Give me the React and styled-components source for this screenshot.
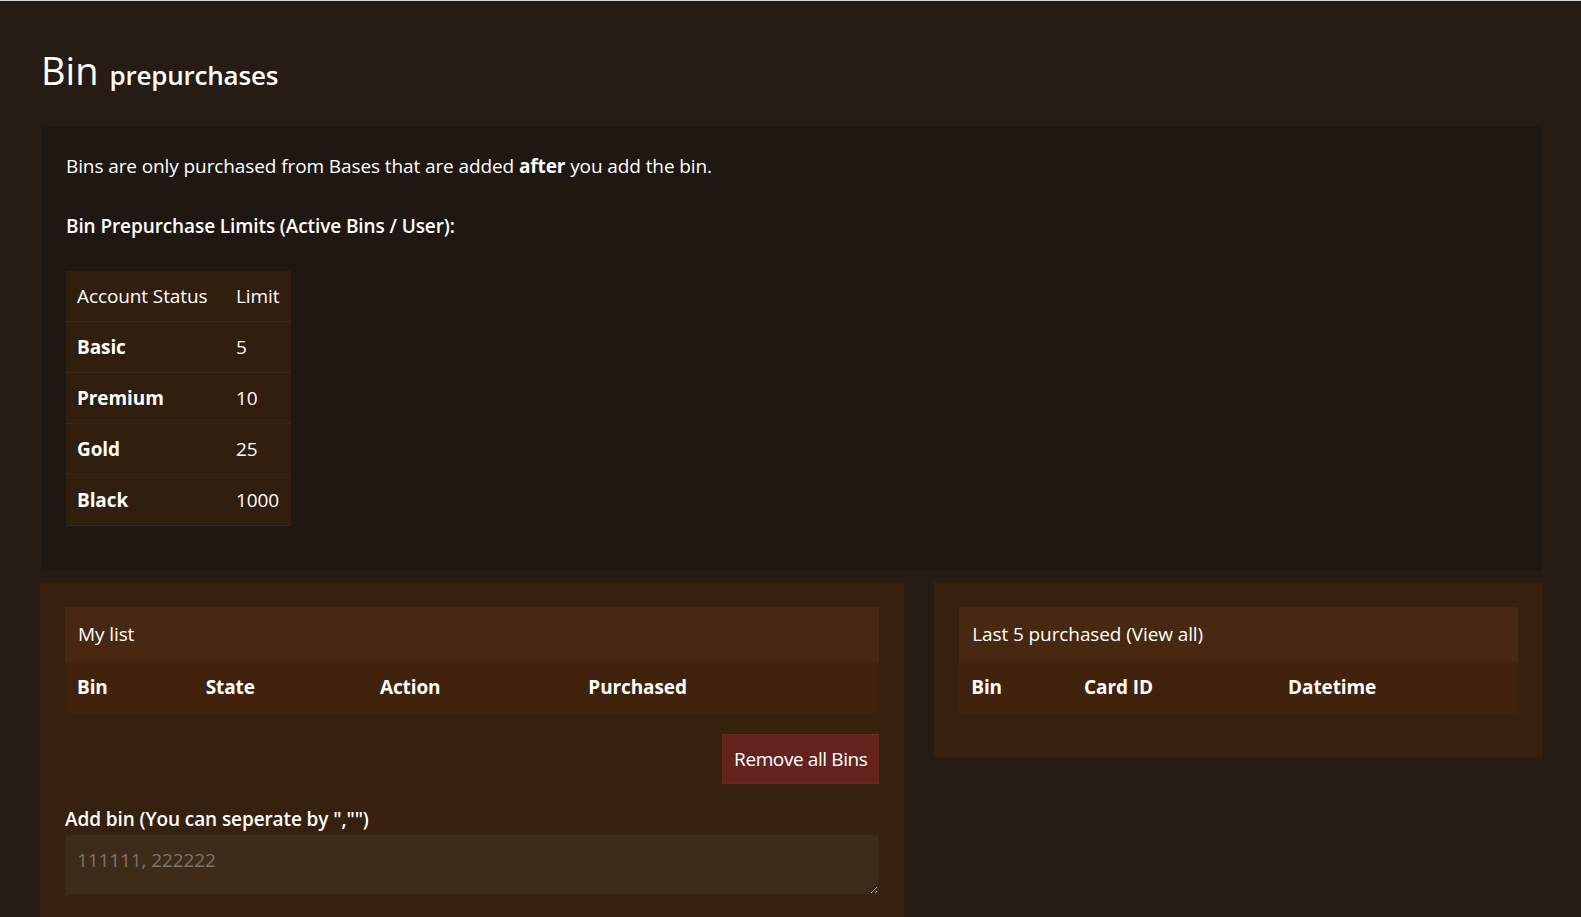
import React from 'react';
import styled, { createGlobalStyle } from 'styled-components';

const GlobalStyle = createGlobalStyle`
  body {
    margin: 0;
    background: #271c13;
    color: #ffffff;
    font-family: "Open Sans", "Noto Sans", sans-serif;
    font-size: 19px;
    line-height: 30px;
    letter-spacing: -0.1px;
  }
  * { box-sizing: border-box; }
`;

const Page = styled.div`
  border-top: 1px solid #d6d6d6;
  padding: 0 38px 0 40px;
`;

const Title = styled.h1`
  margin: 45px 0 27px 1px;
  font-size: 38px;
  font-weight: 400;
  line-height: 48px;
  letter-spacing: 0;
`;

const SubTitle = styled.small`
  margin-left: 11px;
  font-size: 26px;
  font-weight: 600;
  letter-spacing: -0.2px;
`;

const InfoPanel = styled.div`
  margin: 0 1px;
  background: #1f1712;
  padding: 25px;
`;

const Para = styled.p`
  margin: 0 0 30px;
  font-weight: ${(p) => (p.$bold ? 600 : 400)};
`;

const LimitTable = styled.table`
  border-collapse: collapse;
  background: #301e0e;
  margin-bottom: 20px;

  td {
    padding: 10px 11px;
    border-bottom: 1px solid #40250f;
    text-align: left;
    vertical-align: top;
  }
  td:first-child { width: 159px; }
  td:last-child { width: 66px; }
  tbody tr:not(:first-child) td:first-child { font-weight: 700; }
`;

const Row = styled.div`
  display: flex;
  gap: 30px;
  margin-top: 11px;
  align-items: flex-start;
`;

const Column = styled.div`
  flex: 0 0 calc((100% + 30px) * ${(p) => p.$span} / 12 - 30px);
  background: #36210f;
  padding: 25px;
`;

const Card = styled.div`
  margin-bottom: ${(p) => p.$gap || 0}px;
`;

const CardHead = styled.div`
  background: #472810;
  padding: 12px 13px 13px;
`;

const DataTable = styled.table`
  width: 100%;
  border-collapse: collapse;
  background: #41230d;

  th {
    padding: 10px 12px 11px;
    text-align: left;
    font-weight: 700;
  }
`;

const Toolbar = styled.div`
  display: flex;
  justify-content: flex-end;
  margin-top: 21px;
`;

const DangerButton = styled.button`
  font: inherit;
  letter-spacing: -0.4px;
  white-space: nowrap;
  color: #ffffff;
  background: #63241f;
  border: 1px solid #6b2822;
  padding: 9px 10px 9px 10px;
  line-height: 30px;
  min-width: 157px;
  cursor: pointer;
`;

const Label = styled.label`
  display: block;
  margin-top: 20px;
  font-weight: 600;
`;

const TextArea = styled.textarea`
  display: block;
  width: 100%;
  height: 61px;
  background: #3e2b1a;
  border: 1px solid #3a2415;
  color: #ffffff;
  font: inherit;
  letter-spacing: inherit;
  padding: 10px 11px;
  outline: none;

  &::placeholder { color: #7d7268; }
`;

function HeadRow({ cols }) {
  return (
    <thead>
      <tr>
        {cols.map(([label, width]) => (
          <th key={label} style={width ? { width } : undefined}>{label}</th>
        ))}
      </tr>
    </thead>
  );
}

const limits = [
  ['Basic', '5'],
  ['Premium', '10'],
  ['Gold', '25'],
  ['Black', '1000'],
];

export default function App() {
  return (
    <>
      <GlobalStyle />
      <Page>
        <Title>Bin<SubTitle>prepurchases</SubTitle></Title>
        <InfoPanel>
          <Para>Bins are only purchased from Bases that are added <b>after</b> you add the bin.</Para>
          <Para $bold>Bin Prepurchase Limits (Active Bins / User):</Para>
          <LimitTable>
            <tbody>
              <tr><td>Account Status</td><td>Limit</td></tr>
              {limits.map(([status, limit]) => (
                <tr key={status}><td>{status}</td><td>{limit}</td></tr>
              ))}
            </tbody>
          </LimitTable>
        </InfoPanel>

        <Row>
          <Column $span={7}>
            <Card>
              <CardHead>My list</CardHead>
              <DataTable>
                <HeadRow cols={[['Bin', '15.8%'], ['State', '21.4%'], ['Action', '25.6%'], ['Purchased']]} />
              </DataTable>
            </Card>
            <Toolbar>
              <DangerButton>Remove all Bins</DangerButton>
            </Toolbar>
            <Label>Add bin (You can seperate by ","")</Label>
            <TextArea placeholder="111111, 222222" />
          </Column>
          <Column $span={5}>
            <Card $gap={20}>
              <CardHead>Last 5 purchased (View all)</CardHead>
              <DataTable>
                <HeadRow cols={[['Bin', '20.2%'], ['Card ID', '36.5%'], ['Datetime']]} />
              </DataTable>
            </Card>
          </Column>
        </Row>
      </Page>
    </>
  );
}
